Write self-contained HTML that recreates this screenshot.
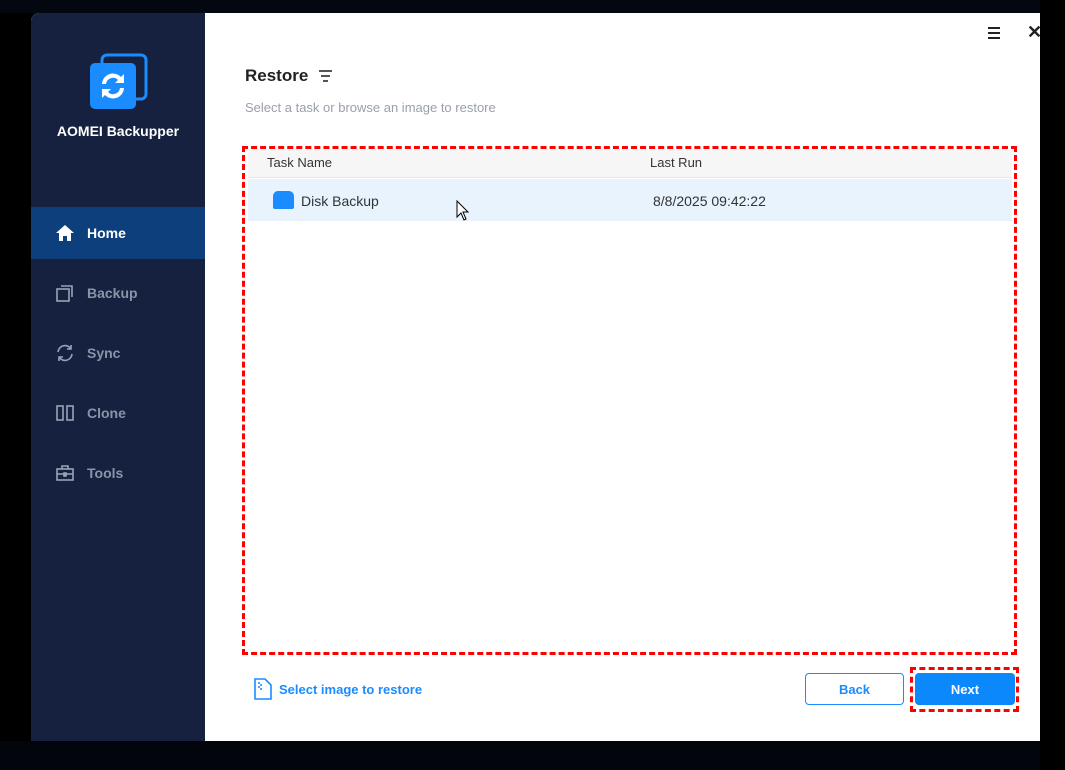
<!DOCTYPE html>
<html><head><style>
*{margin:0;padding:0;box-sizing:border-box}
body{width:1065px;height:770px;background:#000;position:relative;overflow:hidden;font-family:"Liberation Sans",sans-serif}
.abs{position:absolute}
.win{left:31px;top:13px;width:1009px;height:728px;background:#fff;border-top-left-radius:8px;overflow:hidden}
.side{left:0;top:0;width:174px;height:728px;background:#15213f}
.nav{left:0;width:174px;height:52px;color:#8a94a8;font-size:14px;font-weight:bold}
.nav span{position:absolute;left:56px;top:18px}
.nav svg{position:absolute;left:24px;top:16px}
</style></head><body>
<div class="abs" style="left:0;top:0;width:1040px;height:13px;background:#03070f"></div>
<div class="abs" style="left:0;top:741px;width:1040px;height:29px;background:#02050c"></div>
<div class="abs win">
 <div class="abs side">
  <svg class="abs" style="left:58px;top:40px" width="60" height="60" viewBox="0 0 60 60">
   <rect x="13" y="2" width="44" height="44" rx="5" fill="none" stroke="#1a8cff" stroke-width="3"/>
   <rect x="1" y="10" width="46" height="46" rx="5" fill="#1a8cff"/>
   <path d="M13 31a11 11 0 0 1 19-7l3-3v9h-9l3-3a7 7 0 0 0-12 4z" fill="#fff"/>
   <path d="M35 35a11 11 0 0 1-19 7l-3 3v-9h9l-3 3a7 7 0 0 0 12-4z" fill="#fff"/>
  </svg>
  <div class="abs" style="left:0;width:174px;top:110px;text-align:center;color:#fff;font-weight:bold;font-size:14px">AOMEI Backupper</div>
  <div class="abs nav" style="top:194px;background:#0c3f7c;color:#fff"><svg width="20" height="20" viewBox="0 0 20 20"><path d="M10 2L1 10h3v8h4v-5h4v5h4v-8h3z" fill="#fff"/></svg><span>Home</span></div>
  <div class="abs nav" style="top:254px"><svg width="20" height="20" viewBox="0 0 20 20" fill="none" stroke="#9aa3b5" stroke-width="1.6"><rect x="2" y="6" width="12" height="12"/><path d="M6 3h11v11"/></svg><span>Backup</span></div>
  <div class="abs nav" style="top:314px"><svg width="20" height="20" viewBox="0 0 20 20" fill="none" stroke="#9aa3b5" stroke-width="1.6"><path d="M3 9a7 7 0 0 1 13-3M17 11a7 7 0 0 1-13 3"/><path d="M16 2v4h-4M4 18v-4h4"/></svg><span>Sync</span></div>
  <div class="abs nav" style="top:374px"><svg width="20" height="20" viewBox="0 0 20 20" fill="none" stroke="#9aa3b5" stroke-width="1.6"><rect x="2" y="3" width="6" height="14"/><rect x="12" y="3" width="6" height="14"/></svg><span>Clone</span></div>
  <div class="abs nav" style="top:434px"><svg width="20" height="20" viewBox="0 0 20 20" fill="none" stroke="#9aa3b5" stroke-width="1.6"><rect x="2" y="6" width="16" height="11"/><path d="M7 6V3h6v3M2 11h16"/><rect x="9" y="10" width="2" height="3" fill="#9aa3b5"/></svg><span>Tools</span></div>
 </div>
 <div class="abs" style="left:957px;top:14px;width:12px;height:12px">
  <div style="height:2px;background:#222;margin-bottom:3px"></div><div style="height:2px;background:#222;margin-bottom:3px"></div><div style="height:2px;background:#222"></div></div>
 <div class="abs" style="left:996px;top:9px;font-size:18px;color:#222;font-weight:bold">✕</div>
 <div class="abs" style="left:214px;top:53px;font-size:17px;font-weight:bold;color:#222">Restore</div>
 <div class="abs" style="left:288px;top:57px;width:13px">
  <div style="height:2px;background:#555;margin-bottom:3px"></div><div style="height:2px;background:#555;margin:0 2px 3px"></div><div style="height:2px;background:#555;margin:0 4px"></div></div>
 <div class="abs" style="left:214px;top:87px;font-size:13px;color:#9aa0a8">Select a task or browse an image to restore</div>
 <div class="abs" style="left:211px;top:133px;width:775px;height:509px;border:3px dashed #f00"></div>
 <div class="abs" style="left:217px;top:136px;width:764px;height:29px;background:#f6f6f6;border-bottom:1px solid #e6e6e6"></div>
 <div class="abs" style="left:236px;top:142px;font-size:13px;color:#333">Task Name</div>
 <div class="abs" style="left:619px;top:142px;font-size:13px;color:#333">Last Run</div>
 <div class="abs" style="left:217px;top:166px;width:764px;height:42px;background:#e8f3fe"></div>
 <div class="abs" style="left:242px;top:178px;width:21px;height:18px;background:#1a8cff;border-radius:5px 5px 2px 2px"></div>
 <div class="abs" style="left:270px;top:180px;font-size:14px;color:#333">Disk Backup</div>
 <div class="abs" style="left:622px;top:180px;font-size:14px;color:#333">8/8/2025 09:42:22</div>
 <svg class="abs" style="left:425px;top:187px" width="14" height="22" viewBox="0 0 14 22"><path d="M1 1v16l4-4 3 7 2-1-3-7h5z" fill="#fff" stroke="#000"/></svg>
 <svg class="abs" style="left:222px;top:665px" width="20" height="22" viewBox="0 0 20 22" fill="none" stroke="#1a8cff" stroke-width="1.6"><path d="M2 1h10l6 6v14H2z"/><path d="M6 4v2M8 6v2M6 8v2M8 10v2" /></svg>
 <div class="abs" style="left:248px;top:669px;font-size:13px;color:#1a8cff;font-weight:bold">Select image to restore</div>
 <div class="abs" style="left:774px;top:660px;width:99px;height:32px;border:1px solid #1a8cff;border-radius:4px;color:#1a8cff;font-weight:bold;font-size:13px;text-align:center;line-height:31px">Back</div>
 <div class="abs" style="left:879px;top:654px;width:109px;height:45px;border:3px dashed #f00"></div>
 <div class="abs" style="left:884px;top:660px;width:100px;height:32px;background:#0a88fc;border-radius:4px;color:#fff;font-weight:bold;font-size:13px;text-align:center;line-height:33px">Next</div>
</div>
</body></html>
